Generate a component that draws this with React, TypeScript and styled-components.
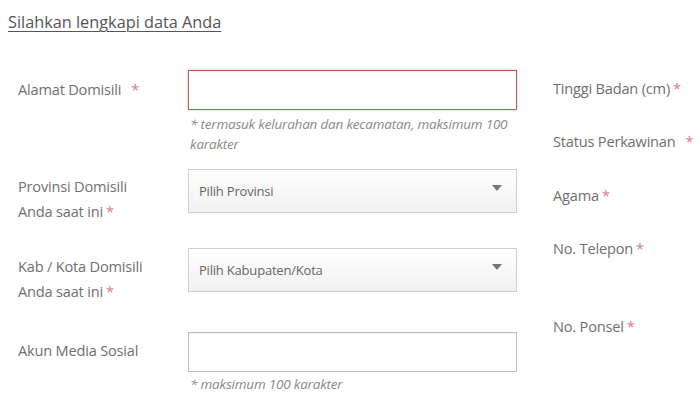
import styled, { createGlobalStyle } from 'styled-components';

const Global = createGlobalStyle`
  html, body {
    margin: 0;
    padding: 0;
    background: #fff;
  }
  body {
    font-family: 'Open Sans', 'Liberation Sans', sans-serif;
    color: #666;
  }
`;

const Page = styled.div`
  width: 700px;
  height: 393px;
  overflow: hidden;
  padding: 11px 0 0 8px;
  box-sizing: border-box;
`;

const Title = styled.h2`
  margin: 0;
  font-size: 16.3px;
  font-weight: 400;
  line-height: 22px;
  color: #555;
  text-decoration: underline;
  text-underline-offset: 3px;
  text-decoration-thickness: 1px;
`;

const Columns = styled.div`
  display: flex;
  margin-top: 37px;
`;

const LeftCol = styled.div`
  width: 535px;
  padding-left: 10px;
  display: flex;
  flex-direction: column;
`;

const RightCol = styled.div`
  display: flex;
  flex-direction: column;
  padding-top: 6px;
`;

const Row = styled.div<{ $gap: number }>`
  display: grid;
  grid-template-columns: 170px 329px;
  align-items: start;
  margin-bottom: ${(p) => p.$gap}px;
`;

const Label = styled.label<{ $top?: number }>`
  font-size: 14.6px;
  line-height: 25px;
  color: #707070;
  padding-top: ${(p) => p.$top ?? 0}px;
  letter-spacing: -0.2px;
`;

const Star = styled.span<{ $space?: boolean }>`
  color: #e07b86;
  margin-left: ${(p) => (p.$space ? '10px' : '3px')};
`;

const Field = styled.div`
  display: flex;
  flex-direction: column;
`;

const Input = styled.div<{ $error?: boolean }>`
  height: 40px;
  box-sizing: border-box;
  border: 1px solid ${(p) => (p.$error ? '#b85a5a' : '#bdbdbd')};
  box-shadow: ${(p) => (p.$error ? '0 0 3px rgba(220,80,80,0.35)' : 'inset 0 1px 1px rgba(0,0,0,0.05)')};
  background: #fff;
`;

const Hint = styled.div<{ $compact?: boolean }>`
  font-size: 13.5px;
  font-style: italic;
  line-height: ${(p) => (p.$compact ? '16px' : '20px')};
  color: #8a8a8a;
  margin-top: 4px;
  padding-left: 2px;
  letter-spacing: -0.2px;
`;

const Select = styled.div`
  height: 44px;
  box-sizing: border-box;
  border: 1px solid #cfcfcf;
  background: linear-gradient(#ffffff, #f1f1f1);
  display: flex;
  align-items: center;
  justify-content: space-between;
  padding: 0 14px 0 10px;
  font-size: 13px;
  color: #666;
  letter-spacing: -0.2px;
`;

const Arrow = styled.span`
  width: 0;
  height: 0;
  border-left: 5px solid transparent;
  border-right: 5px solid transparent;
  border-top: 6px solid #777;
  margin-top: -6px;
`;

const SideLabel = styled.div<{ $gap: number }>`
  font-size: 14.6px;
  line-height: 25px;
  color: #707070;
  margin-bottom: ${(p) => p.$gap}px;
  letter-spacing: -0.2px;
`;

export default function App() {
  return (
    <>
      <Global />
      <Page>
        <Title>Silahkan lengkapi data Anda</Title>
        <Columns>
          <LeftCol>
            <Row $gap={15}>
              <Label $top={7}>
                Alamat Domisili<Star $space>*</Star>
              </Label>
              <Field>
                <Input $error />
                <Hint>* termasuk kelurahan dan kecamatan, maksimum 100 karakter</Hint>
              </Field>
            </Row>
            <Row $gap={24}>
              <Label $top={5}>
                Provinsi Domisili
                <br />
                Anda saat ini<Star>*</Star>
              </Label>
              <Field>
                <Select>
                  Pilih Provinsi
                  <Arrow />
                </Select>
              </Field>
            </Row>
            <Row $gap={28}>
              <Label $top={6}>
                Kab / Kota Domisili
                <br />
                Anda saat ini<Star>*</Star>
              </Label>
              <Field>
                <Select>
                  Pilih Kabupaten/Kota
                  <Arrow />
                </Select>
              </Field>
            </Row>
            <Row $gap={0}>
              <Label $top={6}>Akun Media Sosial</Label>
              <Field>
                <Input />
                <Hint $compact>* maksimum 100 karakter</Hint>
              </Field>
            </Row>
          </LeftCol>
          <RightCol>
            <SideLabel $gap={28}>
              Tinggi Badan (cm)<Star>*</Star>
            </SideLabel>
            <SideLabel $gap={29}>
              Status Perkawinan<Star $space>*</Star>
            </SideLabel>
            <SideLabel $gap={28}>
              Agama<Star>*</Star>
            </SideLabel>
            <SideLabel $gap={53}>
              No. Telepon<Star>*</Star>
            </SideLabel>
            <SideLabel $gap={0}>
              No. Ponsel<Star>*</Star>
            </SideLabel>
          </RightCol>
        </Columns>
      </Page>
    </>
  );
}
